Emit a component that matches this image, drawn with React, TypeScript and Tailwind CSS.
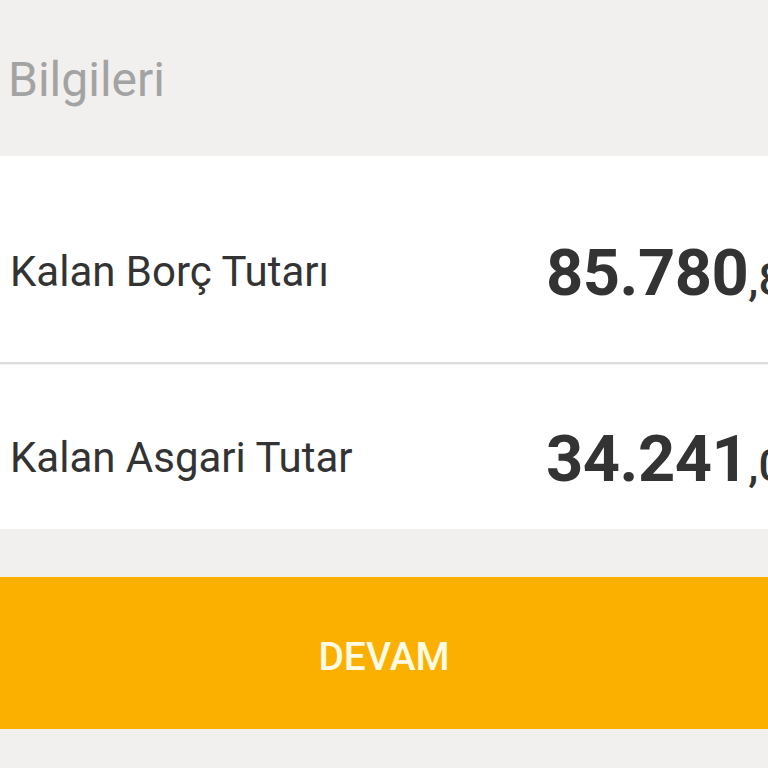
import React from "react";

const font = { fontFamily: "Roboto, 'Noto Sans', sans-serif" };

function Row({ label, whole, frac, h, pt }: { label: string; whole: string; frac: string; h: string; pt: string }) {
  return (
    <div className={`flex items-center ${h} ${pt}`}>
      <div className="flex-1 pl-[10px] text-[42px] leading-[52px] text-[#333333] whitespace-nowrap">{label}</div>
      <div className="w-[222px] shrink-0 overflow-hidden whitespace-nowrap text-[#333333] pt-[8px]">
        <span className="text-[65px] leading-[72px] font-bold tracking-[-0.5px]">{whole}</span>
        <span className="text-[45px] leading-[72px] font-medium">{frac}</span>
      </div>
    </div>
  );
}

export default function App() {
  return (
    <div className="h-[768px] w-[768px] overflow-hidden bg-[#f1f0ee] flex flex-col" style={font}>
      <div className="h-[156px] shrink-0 pl-[8px] pt-[52px]">
        <div className="text-[48px] leading-[56px] text-[#a3a3a3]">Bilgileri</div>
      </div>
      <div className="bg-white flex flex-col">
        <Row label="Kalan Borç Tutarı" whole="85.780" frac=",80 TL" h="h-[206px]" pt="pt-[26px]" />
        <div className="h-[2px] bg-[#dcdcdc]" />
        <div className="h-[1px] bg-[#f3f3f3]" />
        <Row label="Kalan Asgari Tutar" whole="34.241" frac=",00 TL" h="h-[164px]" pt="pt-[22px]" />
      </div>
      <div className="h-[48px] shrink-0" />
      <div className="h-[152px] shrink-0 bg-[#fbb000] flex items-center justify-center pt-[8px]">
        <span className="text-[39px] leading-[46px] font-medium text-[#fffbe4]">DEVAM</span>
      </div>
    </div>
  );
}
